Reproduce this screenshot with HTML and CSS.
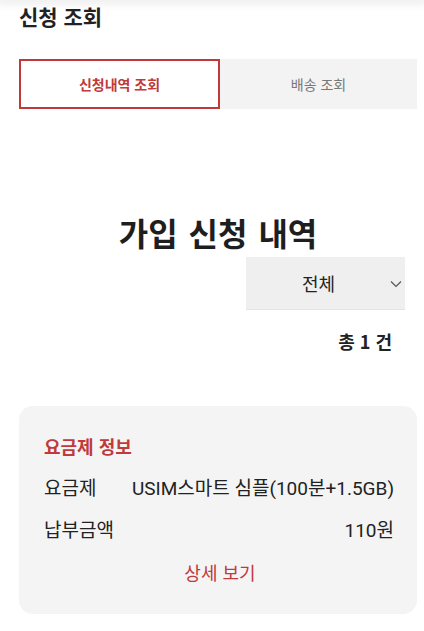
FILE: index.html
```html
<!DOCTYPE html>
<html lang="ko">
<head>
<meta charset="utf-8">
<link rel="stylesheet" href="styles.css">
</head>
<body>
<div class="topbar"></div>
<main class="page">
  <h1 class="title">신청 조회</h1>
  <div class="tabs">
    <div class="tab active">신청내역 조회</div>
    <div class="tab">배송 조회</div>
  </div>
  <h2 class="heading">가입 신청 내역</h2>
  <div class="filter">
    <div class="select">
      <span>전체</span>
      <svg class="chev" width="12" height="8" viewBox="0 0 12 8"><path d="M1 1.5 L6 6.5 L11 1.5" fill="none" stroke="#555" stroke-width="1.2"/></svg>
    </div>
  </div>
  <div class="count">총 1 건</div>
  <section class="card">
    <h3 class="card-title">요금제 정보</h3>
    <div class="row"><span>요금제</span><span>USIM스마트 심플(100분+1.5GB)</span></div>
    <div class="row"><span>납부금액</span><span>110원</span></div>
    <div class="more">상세 보기</div>
  </section>
</main>
</body>
</html>
```

FILE: styles.css
```css
* { box-sizing: border-box; margin: 0; padding: 0; }
body {
  margin: 0;
  background: #fff;
  font-family: "Noto Sans CJK KR", "Noto Sans", sans-serif;
  color: #222;
  overflow: hidden;
}
.topbar {
  height: 0;
  box-shadow: 0 0 8px 3px rgba(0,0,0,0.10);
  position: relative;
  z-index: 2;
}
.page {
  padding: 0 7px 0 19px;
}
.title {
  font-size: 21px;
  font-weight: 700;
  line-height: 32px;
  margin-top: 0;
  color: #222;
}
.tabs {
  display: flex;
  margin-top: 27px;
  height: 50px;
}
.tab {
  flex: 1;
  display: flex;
  align-items: center;
  justify-content: center;
  font-size: 14px;
  color: #777;
  background: #f3f3f3;
}
.tab.active {
  background: #fff;
  border: 2px solid #c0393b;
  color: #c0393b;
  font-weight: 700;
}
.heading {
  margin-top: 98px;
  text-align: center;
  font-size: 32px;
  font-weight: 700;
  line-height: 50px;
  color: #1e1e1e;
  word-spacing: 2px;
}
.filter {
  display: flex;
  justify-content: flex-end;
  padding-right: 12px;
}
.select {
  width: 159px;
  height: 53px;
  background: #efefef;
  border-bottom: 1px solid #e4e4e4;
  position: relative;
  display: flex;
  align-items: center;
  justify-content: center;
  font-size: 18px;
  color: #222;
}
.select span { margin-right: 14px; }
.chev {
  position: absolute;
  right: 3px;
  top: 23px;
}
.count {
  text-align: right;
  padding-right: 25px;
  margin-top: 16px;
  font-size: 18px;
  font-weight: 700;
  line-height: 30px;
}
.card {
  margin-top: 50px;
  background: #f4f4f4;
  border-radius: 14px;
  padding: 24px 23px 21px 25px;
  width: 398px;
}
.card-title {
  font-size: 18px;
  font-weight: 700;
  color: #c0393b;
  line-height: 32px;
}
.row {
  display: flex;
  justify-content: space-between;
  font-family: "Roboto", "Noto Sans CJK KR", sans-serif;
  font-size: 19px;
  line-height: 42px;
  margin-top: 0;
}
.card-title + .row { margin-top: 6px; }
.more {
  text-align: center;
  color: #c0393b;
  font-size: 18px;
  line-height: 42px;
  margin-top: -1px;
  margin-right: -2px;
}
```
